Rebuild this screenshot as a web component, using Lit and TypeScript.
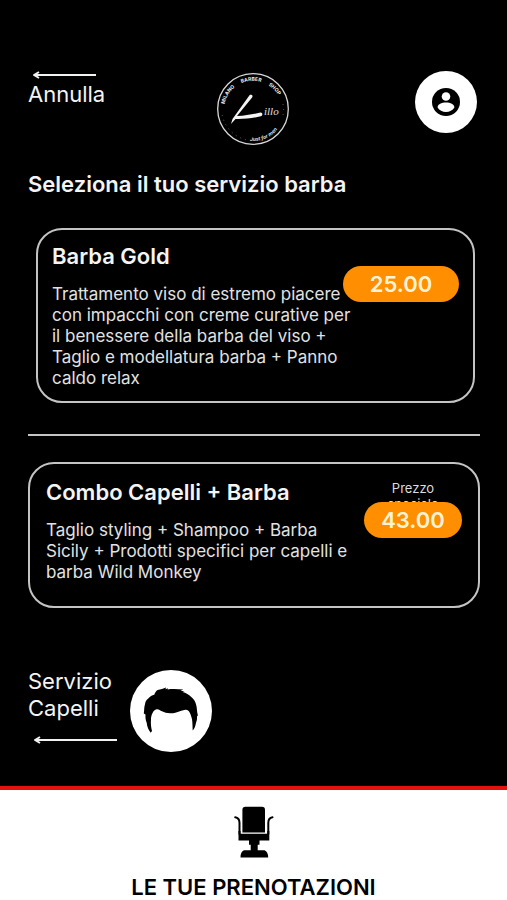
import { LitElement, html, css, svg, nothing } from "lit";
import { customElement, property } from "lit/decorators.js";

@customElement("left-arrow")
class LeftArrow extends LitElement {
  static styles = css`
    :host { display: flex; align-items: center; height: 12px; }
    .head { flex: none; display: block; }
    .line { flex: 1; height: 2px; margin-left: -5px; background: #f2f2f2; }
  `;
  render() {
    return html`
      <svg class="head" width="9" height="10" viewBox="0 0 9 10" aria-hidden="true">
        <path d="M7 2 2 5l5 3M2 5h7" fill="none" stroke="#f2f2f2" stroke-width="2" stroke-linejoin="round" />
      </svg>
      <span class="line"></span>
    `;
  }
}

@customElement("service-card")
class ServiceCard extends LitElement {
  @property() name = "";
  @property() description = "";
  @property() price = "";
  @property() note = "";

  static styles = css`
    :host { display: block; }
    .card {
      box-sizing: border-box;
      display: block;
      width: 100%;
      position: relative;
      border: 2px solid #c4c4c4;
      border-radius: 26px;
      padding: 12px 116px 12px 14px;
      background: #000;
      color: #f4f4f4;
      font: inherit;
      text-align: left;
      cursor: pointer;
    }
    .card.special { padding: 14px 116px 23px 16px; }
    .name { display: block; font-size: 22px; line-height: 28px; font-weight: 600; white-space: nowrap; }
    .text { display: block; margin-top: 14px; font-size: 17px; line-height: 21px; color: #e2e2e2; }
    .side { position: absolute; top: 36px; right: 14px; width: 116px; }
    .special .side { top: 16px; right: 16px; width: 98px; }
    .note {
      display: block;
      height: 22px;
      padding: 0 20px;
      font-size: 13px;
      line-height: 16px;
      text-align: center;
      color: #dcdcdc;
    }
    .price {
      display: block;
      position: relative;
      border-radius: 18px;
      background: #ff8f00;
      color: #fff3d6;
      font-size: 22px;
      line-height: 36px;
      font-weight: 600;
      text-align: center;
    }
  `;
  render() {
    return html`
      <button class="card ${this.note ? "special" : ""}" type="button">
        <span class="name">${this.name}</span>
        <span class="text">${this.description}</span>
        <span class="side">
          ${this.note ? html`<span class="note">${this.note}</span>` : nothing}
          <span class="price">${this.price}</span>
        </span>
      </button>
    `;
  }
}

const logo = svg`
  <circle cx="36" cy="36" r="35.300" fill="none" stroke="#d8d8d8" stroke-width="1.300" />
  <path id="top-arc" d="M8.500 46A29 29 0 1 1 63.500 46" fill="none" />
  <path id="bottom-arc" d="M30 67.500A32 32 0 0 0 67 43" fill="none" />
  <path d="M5.200 42A31.500 31.500 0 0 0 29 66.700" fill="none" stroke="#666" stroke-width="1" stroke-dasharray="1 4" />
  <path d="M66 31A31 31 0 0 1 66 42" fill="none" stroke="#666" stroke-width="1" stroke-dasharray="1 4" />
  <text class="arc"><textPath href="#top-arc" startOffset="15">MILANO</textPath></text>
  <text class="arc"><textPath href="#top-arc" startOffset="43">BARBER</textPath></text>
  <text class="arc"><textPath href="#top-arc" startOffset="71">SHOP</textPath></text>
  <text class="motto"><textPath href="#bottom-arc" startOffset="3">Just for men</textPath></text>
  <path d="M32.500 22.300c1.800-1.300 4 .2 2.600 2.200L20 43c9-.4 16-1.800 23.500-3.500 2.300-.2 2.500 3.200.3 3.700-8 2-16 2.900-25.300 2.700L14 51l1.500-5z" fill="#f4f4f4" />
  <text class="script" x="47" y="42">illo</text>
`;

@customElement("app-root")
class AppRoot extends LitElement {
  static styles = css`
    :host {
      display: flex;
      flex-direction: column;
      min-height: 100vh;
      background: #000;
      color: #f4f4f4;
      font-family: Inter, "Liberation Sans", sans-serif;
    }
    button { border: 0; padding: 0; background: none; color: inherit; font: inherit; cursor: pointer; }
    svg { display: block; }
    header {
      display: grid;
      grid-template-columns: 1fr auto 1fr;
      align-items: start;
      padding: 69px 30px 0 28px;
    }
    .back { justify-self: start; display: block; text-align: left; font-size: 22px; line-height: 26px; }
    .back left-arrow { width: 64px; margin-left: 4px; }
    .logo { margin-top: 4px; }
    .arc { font: 700 5px Inter, sans-serif; fill: #f0f0f0; }
    .motto { font: italic 700 5px Inter, sans-serif; fill: #e0e0e0; }
    .script { font: italic 11px "Liberation Serif", serif; fill: #e0e0e0; }
    .account {
      justify-self: end;
      display: grid;
      place-items: center;
      width: 62px;
      height: 62px;
      margin-top: 2px;
      border-radius: 50%;
      background: #fff;
    }
    main { flex: 1; padding: 25px 27px 34px 28px; }
    h1 { margin: 0; font-size: 22px; line-height: 28px; font-weight: 600; }
    .first { margin: 30px 5px 0 8px; }
    hr { margin: 31px 0 26px; border: 0; height: 2px; background: #c4c4c4; }
    .hair { display: flex; align-items: flex-start; gap: 13px; margin-top: 62px; text-align: left; }
    .label { width: 89px; font-size: 22px; line-height: 27px; margin-top: -2px; }
    .label left-arrow { margin: 12px 0 0 5px; }
    .disc { display: block; width: 82px; height: 82px; border-radius: 50%; background: #fff; }
    footer { border-top: 4px solid #e5110c; background: #fff; color: #000; }
    .bookings {
      display: flex;
      flex-direction: column;
      align-items: center;
      gap: 16px;
      padding-top: 16px;
      color: #000;
      text-decoration: none;
      font-size: 22px;
      line-height: 26px;
      font-weight: 600;
    }
  `;

  render() {
    return html`
      <header>
        <button class="back" type="button">
          <left-arrow></left-arrow>
          Annulla
        </button>
        <svg class="logo" width="72" height="72" viewBox="0 0 72 72" role="img" aria-label="Lillo">${logo}</svg>
        <button class="account" type="button" aria-label="Account">
          <svg width="28" height="28" viewBox="0 0 28 28" aria-hidden="true">
            <circle cx="14" cy="14" r="14" fill="#000" />
            <circle cx="14" cy="8.500" r="4.300" fill="#fff" />
            <path d="M5.600 19.500c0-3.300 4-5 8.400-5s8.400 1.700 8.400 5c-1.800 2.800-4.800 4.600-8.400 4.600s-6.600-1.800-8.400-4.600z" fill="#fff" />
          </svg>
        </button>
      </header>
      <main>
        <h1>Seleziona il tuo servizio barba</h1>
        <service-card
          class="first"
          name="Barba Gold"
          description="Trattamento viso di estremo piacere con impacchi con creme curative per il benessere della barba del viso + Taglio e modellatura barba + Panno caldo relax"
          price="25.00"
        ></service-card>
        <hr />
        <service-card
          name="Combo Capelli + Barba"
          description="Taglio styling + Shampoo + Barba Sicily + Prodotti specifici per capelli e barba Wild Monkey"
          price="43.00"
          note="Prezzo speciale"
        ></service-card>
        <button class="hair" type="button">
          <span class="label">Servizio Capelli<left-arrow></left-arrow></span>
          <span class="disc">
            <svg width="82" height="82" viewBox="0 0 82 82" aria-hidden="true">
              <path
                d="M20.700 62.700C18.500 60 17 56.500 16.700 52.700 15.500 50 15.300 47 15.500 44.500L13.800 43.500C14.300 40.500 14 37 15 34.300 15.300 31.500 16.300 29.700 18 28.700 20 26.500 22 25 24.300 24.700 25 22.500 26 21 27.700 20 30.500 19.300 33.500 18.800 36 17.500L35.500 19.200 38 18.200 37.500 19.600C43 18.700 48.500 19.300 53.300 19.600L50.500 20.800 54.500 21.300 52.500 22C56 23 59 24.500 61 26.700 63.800 29 65.300 31.500 66 34.300 67.200 38 66.800 42 67.900 45.300L67 46.500C67.200 49 66.800 51 66 52.700 65.500 56 64.500 58.500 62.700 60.500 62.500 57 62.600 53 62 49.300 61.300 46 60.300 43 58.700 41 57.500 39.900 56.500 39.500 55.300 39.700 52.500 40.200 50 41 47.700 42 45 43.200 42.500 43.500 40 43.300 37 43.200 34.300 42.500 32 41.300 30 40.500 28.500 38.800 26.700 39.300 24.800 40 23.500 41 22.700 42.700 21.500 44.800 21 47 21 49.300 20.600 54 21.200 58 22 61z"
                fill="#000"
              />
            </svg>
          </span>
        </button>
      </main>
      <footer>
        <a class="bookings" href="#prenotazioni">
          <svg width="40" height="52" viewBox="0 0 40 52" aria-hidden="true">
            <path d="M8.400 4Q8.400.8 11.500.8h16.500Q31 .8 31 4v22.500H8.400z" fill="#000" />
            <path d="M1.200 11.300Q5.500 12 5.500 17v11M38.500 11.300Q34.300 12 34.300 17v11" fill="none" stroke="#000" stroke-width="2" stroke-linecap="round" />
            <path d="M4.500 25H6.500v2.800h26.800V25h2v9.500h-9.800v4.200h-1.800v5.600H30.500Q34 45.500 34.200 51.500H6.500Q6.500 45.500 10 44.300h6.700v-5.600H15v-4.200H4.500z" fill="#000" />
          </svg>
          LE TUE PRENOTAZIONI
        </a>
      </footer>
    `;
  }
}
